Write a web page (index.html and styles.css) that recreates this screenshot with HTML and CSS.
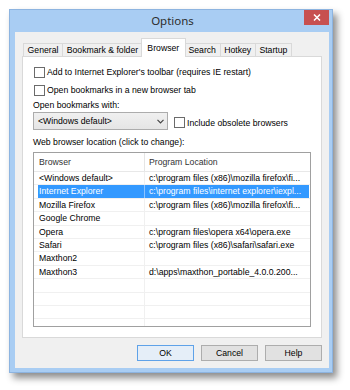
FILE: index.html
```html
<!DOCTYPE html>
<html>
<head>
<meta charset="utf-8">
<title>Options</title>
<link rel="stylesheet" href="styles.css">
</head>
<body>
<div class="window">
  <div class="titlebar">
    <span></span>
    <span class="title">Options</span>
    <div class="close"><svg width="8" height="7" viewBox="0 0 8 7"><path d="M1 0.5 L7 6.5 M7 0.5 L1 6.5" stroke="#fff" stroke-width="1.5"/></svg></div>
  </div>
  <div class="client">
    <div class="tabs">
      <div class="tab first">General</div>
      <div class="tab">Bookmark &amp; folder</div>
      <div class="tab sel">Browser</div>
      <div class="tab">Search</div>
      <div class="tab">Hotkey</div>
      <div class="tab">Startup</div>
    </div>
    <div class="panel">
      <div class="check"><span class="box"></span><span>Add to Internet Explorer's toolbar (requires IE restart)</span></div>
      <div class="check gap"><span class="box"></span><span>Open bookmarks in a new browser tab</span></div>
      <div class="label first-label">Open bookmarks with:</div>
      <div class="combo-row">
        <div class="combo"><span>&lt;Windows default&gt;</span><svg width="7" height="5" viewBox="0 0 7 5"><path d="M0.5 0.8 L3.5 3.8 L6.5 0.8" fill="none" stroke="#444" stroke-width="1.2"/></svg></div>
        <div class="check obsolete"><span class="box"></span><span>Include obsolete browsers</span></div>
      </div>
      <div class="label web-label">Web browser location (click to change):</div>
      <div class="list">
        <div class="row head"><div class="c1">Browser</div><div class="c2">Program Location</div></div>
        <div class="row"><div class="c1">&lt;Windows default&gt;</div><div class="c2">c:\program files (x86)\mozilla firefox\fi...</div></div>
        <div class="row sel"><div class="c1">Internet Explorer</div><div class="c2">c:\program files\internet explorer\iexpl...</div></div>
        <div class="row"><div class="c1">Mozilla Firefox</div><div class="c2">c:\program files (x86)\mozilla firefox\fi...</div></div>
        <div class="row"><div class="c1">Google Chrome</div><div class="c2"></div></div>
        <div class="row"><div class="c1">Opera</div><div class="c2">c:\program files\opera x64\opera.exe</div></div>
        <div class="row"><div class="c1">Safari</div><div class="c2">c:\program files (x86)\safari\safari.exe</div></div>
        <div class="row"><div class="c1">Maxthon2</div><div class="c2"></div></div>
        <div class="row"><div class="c1">Maxthon3</div><div class="c2">d:\apps\maxthon_portable_4.0.0.200...</div></div>
        <div class="row"><div class="c1"></div><div class="c2"></div></div>
        <div class="row"><div class="c1"></div><div class="c2"></div></div>
        <div class="row"><div class="c1"></div><div class="c2"></div></div>
        <div class="row"><div class="c1"></div><div class="c2"></div></div>
      </div>
    </div>
    <div class="buttons">
      <div class="btn default">OK</div>
      <div class="btn">Cancel</div>
      <div class="btn">Help</div>
    </div>
  </div>
</div>
</body>
</html>
```

FILE: styles.css
```css
* { box-sizing: border-box; }
html, body {
  margin: 0;
  padding: 0;
  background: #fff;
  width: 350px;
  height: 390px;
  overflow: hidden;
}
body {
  font-family: "Liberation Sans", Arial, sans-serif;
  font-size: 8.7px;
  color: #000;
  padding: 9px 0 0 9px;
}
.window {
  width: 324px;
  height: 364px;
  background: #a9cdf3;
  border: 1px solid #8db4e0;
  padding: 0 3px 4px 5px;
  box-shadow: 4px 5px 7px rgba(0, 0, 0, 0.45);
  display: flex;
  flex-direction: column;
}
.titlebar {
  height: 22px;
  display: grid;
  grid-template-columns: 1fr auto 1fr;
  align-items: start;
}
.title {
  font-family: "Noto Sans", "Liberation Sans", sans-serif;
  font-size: 11.5px;
  color: #2d2d2d;
  line-height: 22px;
  margin-left: 1px;
}
.close {
  justify-self: end;
  width: 25px;
  height: 15px;
  background: #c75050;
  display: flex;
  align-items: center;
  justify-content: center;
}
.client {
  height: 336px;
  background: #f0f0f0;
  padding: 6px 7px 7px 7px;
  display: flex;
  flex-direction: column;
}
.tabs {
  height: 19px;
  margin-bottom: -1px;
  display: flex;
  align-items: flex-end;
  position: relative;
  z-index: 1;
}
.tab {
  height: 13px;
  margin-bottom: 1px;
  padding: 0 3.6px;
  border: 1px solid #d9d9d9;
  border-bottom: none;
  background: #f0f0f0;
  margin-left: -1px;
  line-height: 12px;
  white-space: nowrap;
}
.tab.first { margin-left: 1px; }
.tab.sel {
  height: 19px;
  margin: 0 -2px 0 -2px;
  padding: 0 5.6px;
  background: #fff;
  line-height: 18px;
  position: relative;
  z-index: 2;
}
.tab.sel + .tab { margin-left: 0; }
.panel {
  height: 282px;
  background: #fff;
  border: 1px solid #d9d9d9;
  padding: 7px 10px 10px 10px;
  display: flex;
  flex-direction: column;
}
.check {
  height: 16px;
  display: flex;
  align-items: center;
  gap: 2px;
  margin-left: 1px;
  white-space: nowrap;
}
.check.gap { margin-top: 2px; }
.box {
  width: 11px;
  height: 11px;
  border: 1px solid #6b6b6b;
  background: #fff;
  flex: none;
}
.label {
  height: 13px;
  line-height: 13px;
}
.first-label { margin-top: 1px; }
.web-label { margin-top: 6px; }
.combo-row {
  height: 18px;
  display: flex;
  align-items: center;
}
.combo {
  width: 135px;
  height: 18px;
  border: 1px solid #acacac;
  background: linear-gradient(#f0f0f0, #e5e5e5);
  display: flex;
  align-items: center;
  justify-content: space-between;
  padding: 0 3px 0 4px;
}
.check.obsolete { margin-left: 6px; margin-top: 3px; }
.list {
  margin-top: 3px;
  height: 175px;
  border: 1px solid #a0a0a0;
  overflow: hidden;
  display: flex;
  flex-direction: column;
}
.row {
  flex: none;
  height: 13.4px;
  display: flex;
  border-bottom: 1px solid #f0f0f0;
  line-height: 12.4px;
  white-space: nowrap;
}
.row.head {
  height: 19px;
  line-height: 18px;
  color: #333;
  border-bottom: 1px solid #e8e8e8;
}
.c1 {
  width: 111px;
  flex: none;
  padding-left: 5px;
  border-right: 1px solid #f0f0f0;
  overflow: hidden;
}
.c2 {
  flex: 1;
  padding-left: 4px;
  overflow: hidden;
}
.head .c1 { border-right-color: #e5e5e5; }
.row.sel { color: #fff; }
.row.sel .c1 {
  background: linear-gradient(90deg, transparent 4px, #3399ff 4px);
  border-right-color: #8cc4ff;
}
.row.sel .c2 {
  background: linear-gradient(90deg, #3399ff calc(100% - 1px), transparent calc(100% - 1px));
}
.buttons {
  margin-top: 7px;
  height: 16px;
  display: flex;
  justify-content: flex-end;
  gap: 7px;
}
.btn {
  width: 57px;
  height: 16px;
  border: 1px solid #adadad;
  background: #e1e1e1;
  text-align: center;
  line-height: 14px;
}
.btn.default {
  border-color: #5fa2e8;
  background: #e5eef8;
}
```
